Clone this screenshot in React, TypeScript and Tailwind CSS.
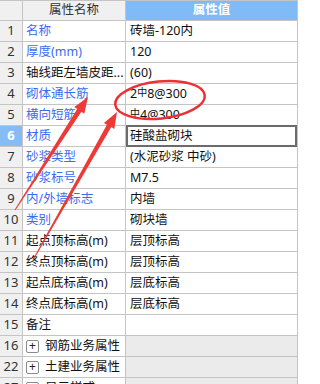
import React from "react";

type Row = {
  no: string;
  name: string;
  value?: React.ReactNode;
  blue?: boolean;
  group?: boolean;
  selected?: boolean;
};

const rebar = <span className="relative -top-[2px] text-[10px]">中</span>;

const rows: Row[] = [
  { no: "1", name: "名称", value: "砖墙-120内", blue: true },
  { no: "2", name: "厚度(mm)", value: "120", blue: true },
  { no: "3", name: "轴线距左墙皮距...", value: "(60)" },
  { no: "4", name: "砌体通长筋", value: <>2{rebar}8@300</>, blue: true },
  { no: "5", name: "横向短筋", value: <>{rebar}4@300</>, blue: true },
  { no: "6", name: "材质", value: "硅酸盐砌块", blue: true, selected: true },
  { no: "7", name: "砂浆类型", value: "(水泥砂浆 中砂)", blue: true },
  { no: "8", name: "砂浆标号", value: "M7.5", blue: true },
  { no: "9", name: "内/外墙标志", value: "内墙", blue: true },
  { no: "10", name: "类别", value: "砌块墙", blue: true },
  { no: "11", name: "起点顶标高(m)", value: "层顶标高" },
  { no: "12", name: "终点顶标高(m)", value: "层顶标高" },
  { no: "13", name: "起点底标高(m)", value: "层底标高" },
  { no: "14", name: "终点底标高(m)", value: "层底标高" },
  { no: "15", name: "备注", value: "" },
  { no: "16", name: "钢筋业务属性", group: true },
  { no: "22", name: "土建业务属性", group: true },
  { no: "27", name: "显示样式", group: true },
];

function PlusBox() {
  return (
    <span className="w-[13px] h-[13px] mr-[6px] border border-[#8a8a8a] rounded-[2px] bg-white flex items-center justify-center text-[12px] leading-none text-[#222]">
      +
    </span>
  );
}

export default function App() {
  return (
    <div
      className="relative w-[300px] h-[384px] overflow-hidden bg-white text-[12.5px] text-[#111]"
      style={{ fontFamily: '"Noto Sans", "Noto Sans CJK SC", sans-serif' }}
    >
      <div className="w-[298px] border-r border-[#c4c4c4]">
        {/* header */}
        <div className="flex h-[21px] border-y border-[#c4c4c4]">
          <div className="w-[23px] bg-[#f0f0f0] border-r border-[#c4c4c4]" />
          <div className="w-[103px] bg-[#f0f0f0] border-r border-[#c4c4c4] flex items-center justify-center text-[#333]">
            属性名称
          </div>
          <div className="flex-1 bg-[#80bbf8] flex items-center justify-center text-white font-bold">
            属性值
          </div>
        </div>

        {rows.map((r) => (
          <div key={r.no} className="flex h-[21px] border-b border-[#c4c4c4]">
            <div
              className={
                r.selected
                  ? "w-[23px] shrink-0 bg-[#86bcf6] border-r border-[#c4c4c4] flex items-center justify-center text-[13px] text-white font-bold"
                  : "w-[23px] shrink-0 bg-[#f0f0f0] border-r border-[#c4c4c4] flex items-center justify-center text-[13px] text-[#333]"
              }
            >
              {r.no}
            </div>
            <div
              className={
                r.blue
                  ? "w-[103px] shrink-0 border-r border-[#c4c4c4] flex items-center pl-[3px] text-[#3a6cf0] whitespace-nowrap overflow-hidden"
                  : "w-[103px] shrink-0 border-r border-[#c4c4c4] flex items-center pl-[3px] whitespace-nowrap overflow-hidden"
              }
            >
              {r.group && <PlusBox />}
              {r.name}
            </div>
            {r.group ? (
              <div className="flex-1 bg-[#ebebeb]" />
            ) : r.selected ? (
              <div className="flex-1 border-2 border-[#6b6b6b] -my-px flex items-center pl-[2px]">
                {r.value}
              </div>
            ) : (
              <div className="flex-1 flex items-center pl-[4px] whitespace-nowrap">{r.value}</div>
            )}
          </div>
        ))}
      </div>

      {/* red annotation overlay */}
      <svg className="absolute left-0 top-0 pointer-events-none" width="300" height="384" viewBox="0 0 300 384">
        <ellipse
          cx="160"
          cy="100"
          rx="45"
          ry="18.5"
          transform="rotate(-6 160 100)"
          fill="none"
          stroke="#ea3236"
          strokeWidth="2.5"
        />
        <polygon
          fill="#ee3a36"
          points="14.6,209.7 77.2,109 74.3,107.1 88,97 84.3,113.7 81.4,111.8 15.4,210.3"
        />
        <polygon
          fill="#ee3a36"
          points="32.6,259.8 106.9,124.7 103.9,122.9 117,112 114.3,128.9 111.3,127.1 33.4,260.2"
        />
      </svg>
    </div>
  );
}
